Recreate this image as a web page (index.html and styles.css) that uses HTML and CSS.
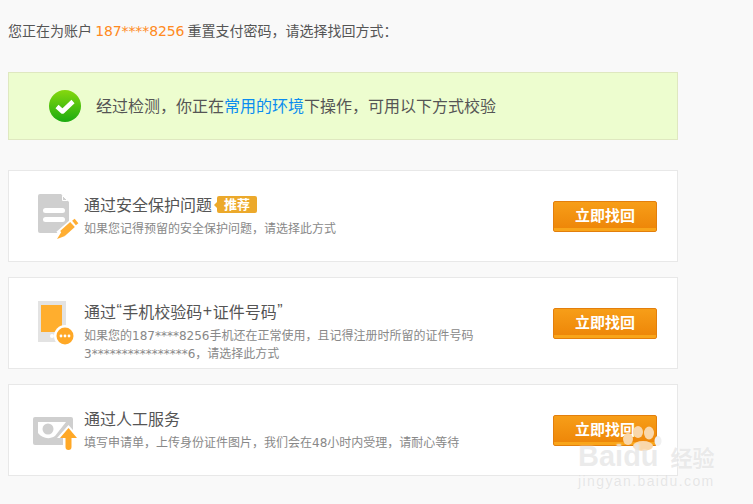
FILE: index.html
```html
<!DOCTYPE html>
<html lang="zh-CN">
<head>
  <meta charset="UTF-8">
  <title>重置支付密码</title>
  <link rel="stylesheet" href="styles.css">
</head>
<body>
  <p class="intro">您正在为账户 <span class="acct">187****8256</span> 重置支付密码，请选择找回方式：</p>

  <div class="notice">
    <svg class="notice-icon" width="32" height="32" viewBox="0 0 32 32">
      <defs>
        <linearGradient id="ok" x1="0" y1="0" x2="0" y2="1">
          <stop offset="0" stop-color="#86d80e"/>
          <stop offset="1" stop-color="#1bab10"/>
        </linearGradient>
      </defs>
      <circle cx="16" cy="16" r="16" fill="url(#ok)"/>
      <path d="M8 16.500l5.500 5L24 11.500" fill="none" stroke="#fff" stroke-width="4.500" stroke-linejoin="round"/>
    </svg>
    <span class="notice-text">经过检测，你正在<span class="link">常用的环境</span>下操作，可用以下方式校验</span>
  </div>

  <div class="method">
    <svg class="method-icon" width="46" height="46" viewBox="0 0 46 46">
      <path d="M10 1h21l8 8v29a2 2 0 0 1-2 2H10a2 2 0 0 1-2-2V3a2 2 0 0 1 2-2z" fill="#cfcfcf"/>
      <path d="M32.500 2.500v5h5z" fill="#cfcfcf" stroke="#fff"/>
      <rect x="13" y="15" width="22" height="5" rx="2.500" fill="#fff"/>
      <rect x="13" y="24" width="22" height="5" rx="2.500" fill="#fff"/>
      <path d="M30 43l15-13" stroke="#fff" stroke-width="11"/>
      <path d="M32 38l-5 8 8-3z" fill="#ffae33"/>
      <path d="M32.500 40.500l10-9" stroke="#ffae33" stroke-width="7"/>
      <path d="M44 30l2.500-2" stroke="#ffae33" stroke-width="6"/>
    </svg>
    <div class="method-text">
      <h3>通过安全保护问题<span class="tag">推荐</span></h3>
      <p>如果您记得预留的安全保护问题，请选择此方式</p>
    </div>
    <a class="btn">立即找回</a>
  </div>

  <div class="method">
    <svg class="method-icon" width="46" height="46" viewBox="0 0 46 46">
      <rect x="8" y="1" width="28" height="41" fill="#e3e3e3"/>
      <rect x="11" y="5" width="21" height="27" fill="#ffae2e"/>
      <circle cx="22" cy="36" r="2" fill="#fff"/>
      <circle cx="35" cy="36" r="11" fill="#fff"/>
      <circle cx="35" cy="36" r="8.500" fill="#ffa826"/>
      <circle cx="31" cy="36" r="1.400" fill="#fff"/>
      <circle cx="35" cy="36" r="1.400" fill="#fff"/>
      <circle cx="39" cy="36" r="1.400" fill="#fff"/>
    </svg>
    <div class="method-text">
      <h3>通过<span class="sym">“</span>手机校验码<span class="sym">+</span>证件号码<span class="sym">”</span></h3>
      <p>如果您的187****8256手机还在正常使用，且记得注册时所留的证件号码<br>3****************6，请选择此方式</p>
    </div>
    <a class="btn">立即找回</a>
  </div>

  <div class="method">
    <svg class="method-icon" width="46" height="46" viewBox="0 0 46 46">
      <rect x="3" y="10" width="40" height="28" rx="2" fill="#cfcfcf"/>
      <path d="M8 15h28L25 29c-6 4-13 2-17-3z" fill="#fff"/>
      <circle cx="18" cy="22" r="5.500" fill="#cfcfcf"/>
      <path d="M38.500 18L50 31h-6v9a5 5 0 0 1-11 0v-9h-6z" fill="#fff"/>
      <path d="M38.500 21L47 31h-5.500v9a3 3 0 0 1-6 0v-9H30z" fill="#ffa826"/>
    </svg>
    <div class="method-text">
      <h3>通过人工服务</h3>
      <p>填写申请单，上传身份证件图片，我们会在48小时内受理，请耐心等待</p>
    </div>
    <a class="btn">立即找回</a>
  </div>

  <div class="watermark">
    <svg class="paw" width="44" height="36" viewBox="0 0 44 36">
      <ellipse cx="5" cy="13" rx="5" ry="6" fill="#f9d7ab"/>
      <ellipse cx="15" cy="6" rx="5" ry="6" fill="#f9d7ab"/>
      <ellipse cx="26" cy="7" rx="5" ry="6.500" fill="#f9d7ab"/>
      <ellipse cx="35" cy="15" rx="3.500" ry="5" fill="#f0f0f0"/>
      <ellipse cx="20" cy="20" rx="10" ry="5" fill="#f9d7ab"/>
    </svg>
    <div class="wm-logo">Baidu<span class="wm-cn">经验</span></div>
    <div class="wm-url">jingyan.baidu.com</div>
  </div>
</body>
</html>
```

FILE: styles.css
```css
* {
  margin: 0;
  padding: 0;
  box-sizing: border-box;
}
body {
  width: 753px;
  height: 504px;
  overflow: hidden;
  position: relative;
  background: #f9f9f9;
  color: #444;
  font-family: "Noto Sans CJK SC", "Liberation Sans", sans-serif;
  padding: 0 75px 0 8px;
}
.intro {
  font-size: 14px;
  line-height: 20px;
  padding-top: 20px;
  color: #555;
}
.acct {
  color: #ff8a22;
  font-family: "DejaVu Sans", sans-serif;
  letter-spacing: -0.100px;
}
.notice {
  display: flex;
  align-items: center;
  height: 68px;
  margin: 31px 0 30px;
  padding-left: 40px;
  gap: 15px;
  background: #edfdcf;
  border: 1px solid #dfe8c0;
  font-size: 16px;
  color: #555;
}
.notice-icon {
  flex: none;
}
.notice-text {
  position: relative;
  top: -1px;
}
.link {
  color: #0a8cf0;
}
.method {
  display: flex;
  align-items: center;
  height: 92px;
  margin-bottom: 15px;
  padding: 0 20px 0 21px;
  background: #fff;
  border: 1px solid #e8e8e8;
}
.method-icon {
  flex: none;
  margin-right: 8px;
  overflow: visible;
}
.method-text {
  flex: 1;
  align-self: flex-start;
  padding-top: 22px;
}
.method h3 {
  display: flex;
  align-items: center;
  font-size: 16px;
  font-weight: normal;
  line-height: 22px;
  color: #555;
}
.sym {
  font-family: "Liberation Sans", sans-serif;
  padding: 0 0.500px;
}
.method p {
  font-family: "DejaVu Sans", "Noto Sans CJK SC", sans-serif;
  font-size: 12px;
  line-height: 18px;
  color: #888;
  margin-top: 5px;
}
.tag {
  position: relative;
  margin-left: 5px;
  width: 40px;
  height: 17px;
  background: #eca92b;
  border-radius: 2px;
  color: #fff;
  font-size: 13px;
  font-weight: bold;
  line-height: 16px;
  text-align: center;
}
.tag::before {
  content: "";
  position: absolute;
  left: -3px;
  top: 6px;
  border: 3px solid transparent;
  border-left: 0;
  border-right-color: #eca92b;
}
.btn {
  flex: none;
  width: 104px;
  height: 31px;
  line-height: 25px;
  text-align: center;
  color: #fff;
  font-size: 15px;
  font-weight: bold;
  border: 1px solid #e37f0c;
  border-radius: 2px;
  background: linear-gradient(#f79e18, #ee8709 90%, #f9a51a 90%);
}
.watermark {
  position: absolute;
  left: 578px;
  top: 423px;
  width: 135px;
  height: 72px;
  pointer-events: none;
}
.paw {
  position: absolute;
  left: 45px;
  top: 3px;
}
.wm-logo {
  position: absolute;
  left: 0;
  top: 20px;
  font-family: "Liberation Sans", sans-serif;
  font-size: 29px;
  font-weight: bold;
  line-height: 26px;
  color: rgba(215, 215, 215, 0.5);
  white-space: nowrap;
  text-shadow: 0 0 2px rgba(255, 255, 255, 0.8);
}
.wm-cn {
  margin-left: 12px;
  font-family: "Noto Sans CJK SC", sans-serif;
  font-size: 22px;
}
.wm-url {
  position: absolute;
  left: 0;
  top: 50px;
  font-family: "Liberation Sans", sans-serif;
  font-size: 14px;
  line-height: 16px;
  letter-spacing: 1.400px;
  color: rgba(215, 215, 215, 0.6);
  white-space: nowrap;
  text-shadow: 0 0 2px rgba(255, 255, 255, 0.8);
}
```
